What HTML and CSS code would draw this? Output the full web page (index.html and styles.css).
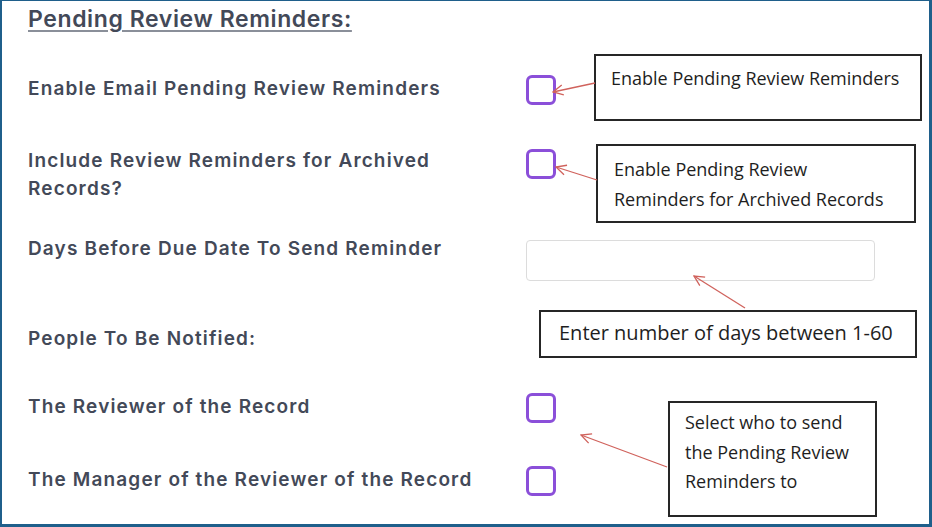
FILE: index.html
```html
<!DOCTYPE html>
<html lang="en">
<head>
<meta charset="utf-8">
<title>Pending Review Reminders</title>
<link rel="stylesheet" href="styles.css">
</head>
<body>
<div class="frame">
  <div class="form">
    <h2 class="title">Pending Review Reminders:</h2>
    <div class="row row-1">
      <div class="label">Enable Email Pending Review Reminders</div>
      <span class="checkbox"></span>
    </div>
    <div class="row row-2">
      <div class="label">Include Review Reminders for Archived<br>Records?</div>
      <span class="checkbox"></span>
    </div>
    <div class="row row-3">
      <div class="label">Days Before Due Date To Send Reminder</div>
      <span class="input"></span>
    </div>
    <div class="row row-4">
      <div class="label">People To Be Notified:</div>
    </div>
    <div class="row row-5">
      <div class="label">The Reviewer of the Record</div>
      <span class="checkbox"></span>
    </div>
    <div class="row row-6">
      <div class="label">The Manager of the Reviewer of the Record</div>
      <span class="checkbox"></span>
    </div>
  </div>

  <div class="callout callout-1">Enable Pending Review Reminders</div>
  <div class="callout callout-2">Enable Pending Review<br>Reminders for Archived Records</div>
  <div class="callout callout-3">Enter number of days between 1-60</div>
  <div class="callout callout-4">Select who to send<br>the Pending Review<br>Reminders to</div>

  <svg class="arrows" width="932" height="527" viewBox="0 0 932 527">
    <defs>
      <marker id="ah" viewBox="0 0 12 12" refX="11" refY="6" markerWidth="12" markerHeight="12" orient="auto" markerUnits="userSpaceOnUse">
        <path d="M1,1 L11,6 L1,11" fill="none" stroke="#d0625c" stroke-width="1.3"/>
      </marker>
    </defs>
    <g stroke="#d0625c" stroke-width="1.3" fill="none">
      <line x1="595" y1="83" x2="553" y2="92" marker-end="url(#ah)"/>
      <line x1="597" y1="180" x2="556" y2="167" marker-end="url(#ah)"/>
      <line x1="745" y1="308" x2="694" y2="276" marker-end="url(#ah)"/>
      <line x1="667" y1="467" x2="581" y2="435" marker-end="url(#ah)"/>
    </g>
  </svg>
</div>
</body>
</html>
```

FILE: styles.css
```css
html, body {
  margin: 0;
  padding: 0;
  background: #ffffff;
}

.frame {
  position: relative;
  width: 932px;
  height: 527px;
  box-sizing: border-box;
  border-style: solid;
  border-color: #1f5f8b;
  border-width: 1px 3px 3px 2px;
  background: #ffffff;
  overflow: hidden;
}

.form {
  display: flex;
  flex-direction: column;
  padding: 4px 0 0 26px;
  font-family: "Inter", "DejaVu Sans", sans-serif;
  color: #434958;
}

.title {
  margin: 0;
  font-size: 23px;
  line-height: 28px;
  font-weight: 600;
  letter-spacing: 0.6px;
  text-decoration: underline;
  text-decoration-color: #8a8f99;
  text-underline-offset: 3px;
  text-decoration-thickness: 2px;
  height: 28px;
  white-space: nowrap;
}

.row {
  display: flex;
  align-items: center;
}

.label {
  width: 498px;
  flex: none;
  font-size: 19px;
  line-height: 28px;
  font-weight: 600;
  letter-spacing: 1.15px;
  white-space: nowrap;
}

.row-1 { margin-top: 42px; height: 30px; }
.row-1 .label { margin-top: -2px; }
.row-2 { margin-top: 43px; align-items: flex-start; }
.row-2 .label { margin-top: -1px; }
.row-2 .checkbox { margin-top: 1px; }
.row-3 { margin-top: 33px; align-items: flex-start; }
.row-3 .label { margin-top: -1px; }
.row-3 .input { margin-top: 4px; }
.row-4 { margin-top: 44px; }
.row-5 { margin-top: 40px; height: 30px; }
.row-5 .label { margin-top: -2px; }
.row-6 { margin-top: 43px; height: 30px; }
.row-6 .label { margin-top: -2px; }

.checkbox {
  display: block;
  width: 30px;
  height: 30px;
  box-sizing: border-box;
  border: 3px solid #8b4fd9;
  border-radius: 6px;
  background: #ffffff;
}

.input {
  display: block;
  width: 349px;
  height: 41px;
  box-sizing: border-box;
  border: 1.5px solid #dcdcdc;
  border-radius: 4px;
}

.callout {
  position: absolute;
  box-sizing: border-box;
  border: 2px solid #262626;
  background: #ffffff;
  font-family: "Open Sans", "Liberation Sans", sans-serif;
  color: #1e1e1e;
  font-size: 18px;
  line-height: 30px;
  white-space: nowrap;
}

.callout-1 {
  left: 592px;
  top: 53px;
  width: 328px;
  height: 67px;
  padding: 7px 0 0 15px;
}

.callout-2 {
  left: 594px;
  top: 143px;
  width: 320px;
  height: 79px;
  padding: 8px 0 0 16px;
}

.callout-3 {
  left: 537px;
  top: 309px;
  width: 378px;
  height: 48px;
  padding: 6px 0 0 18px;
  font-size: 20px;
}

.callout-4 {
  left: 666px;
  top: 400px;
  width: 209px;
  height: 116px;
  padding: 5px 0 0 15px;
  line-height: 29.5px;
}

.arrows {
  position: absolute;
  left: -2px;
  top: -1px;
  pointer-events: none;
}
```
